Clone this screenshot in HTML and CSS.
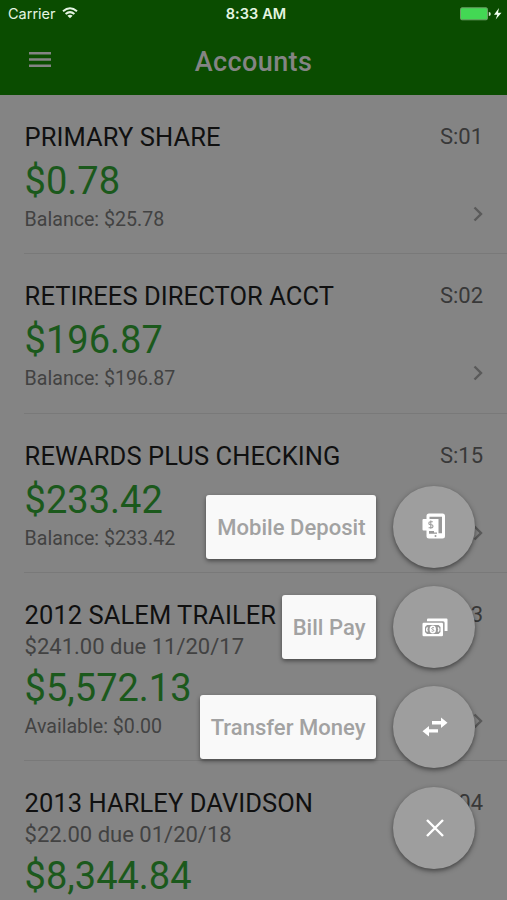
FILE: index.html
```html
<!DOCTYPE html>
<html lang="en">
<head>
<meta charset="utf-8">
<title>Accounts</title>
<link rel="stylesheet" href="styles.css">
</head>
<body>
<div class="screen">
  <header class="header">
    <div class="status">
      <div class="carrier"><span>Carrier</span>
        <svg width="16" height="12" viewBox="0 0 16 12" fill="none" stroke="#e4f5e2" stroke-width="2"><path d="M1 4.2Q8-1.8 15 4.2M3.6 7Q8 3.3 12.4 7"/><path d="M8 11.3L5.4 8.7Q8 6.7 10.6 8.7Z" fill="#e4f5e2" stroke="none"/></svg>
      </div>
      <div class="time">8:33 AM</div>
      <div class="power">
        <svg width="42" height="14" viewBox="0 0 42 14"><rect x=".5" y=".8" width="27" height="12" rx="1.5" fill="#43d854" stroke="#6c9d65"/><path d="M28.8 5a2 2 0 0 1 0 4z" fill="#d8ecd5"/><path d="M39 1L34 7.700H37.300L35.700 12.500L41.500 5.800H38Z" fill="#f2fff0"/></svg>
      </div>
    </div>
    <div class="nav">
      <svg class="menu" width="22" height="16" viewBox="0 0 22 16" fill="#848484"><path d="M0 0h22v2.4H0zM0 6.3h22v2.4H0zM0 12.6h22V15H0z"/></svg>
      <h1>Accounts</h1>
    </div>
  </header>
  <main class="list">
    <section class="row">
      <div class="info"><h2>PRIMARY SHARE</h2><div class="amount">$0.78</div><div class="note">Balance: $25.78</div></div>
      <div class="side"><span>S:01</span><svg class="chev" width="10" height="16" viewBox="0 0 10 16"><path d="M1.5 1.5L8 8L1.5 14.5"/></svg></div>
    </section>
    <section class="row">
      <div class="info"><h2>RETIREES DIRECTOR ACCT</h2><div class="amount">$196.87</div><div class="note">Balance: $196.87</div></div>
      <div class="side"><span>S:02</span><svg class="chev" width="10" height="16" viewBox="0 0 10 16"><path d="M1.5 1.5L8 8L1.5 14.5"/></svg></div>
    </section>
    <section class="row">
      <div class="info"><h2>REWARDS PLUS CHECKING</h2><div class="amount">$233.42</div><div class="note">Balance: $233.42</div></div>
      <div class="side"><span>S:15</span><svg class="chev" width="10" height="16" viewBox="0 0 10 16"><path d="M1.5 1.5L8 8L1.5 14.5"/></svg></div>
    </section>
    <section class="row loan">
      <div class="info"><h2>2012 SALEM TRAILER</h2><div class="due">$241.00 due 11/20/17</div><div class="amount">$5,572.13</div><div class="note">Available: $0.00</div></div>
      <div class="side"><span>L:03</span><svg class="chev" width="10" height="16" viewBox="0 0 10 16"><path d="M1.5 1.5L8 8L1.5 14.5"/></svg></div>
    </section>
    <section class="row loan">
      <div class="info"><h2>2013 HARLEY DAVIDSON</h2><div class="due">$22.00 due 01/20/18</div><div class="amount">$8,344.84</div></div>
      <div class="side"><span>L:04</span></div>
    </section>
  </main>
  <div class="actions">
    <div class="action"><span class="label">Mobile Deposit</span><span class="fab deposit">
      <svg width="24" height="26" viewBox="0 0 24 26"><path fill="#fff" d="M7 .5H20.500a2.500 2.500 0 0 1 2.500 2.500V23a2.500 2.500 0 0 1-2.500 2.500H7A2.500 2.500 0 0 1 4.500 23V17.500H1.500a1 1 0 0 1-1-1V7a1 1 0 0 1 1-1H4.500V3A2.500 2.500 0 0 1 7 .5z"/><path d="M7.500 3.700H20V20.300H16.500V6H7.500zM7 18h5v1.500h3v1.200H7z" fill="#999"/><path d="M10.800 8.700H8.300a1.400 1.400 0 0 0 0 3h1.200a1.400 1.400 0 0 1 0 3H6.600M8.800 7.500v8.300" fill="none" stroke="#9d9d9d" stroke-width="1.100"/><circle cx="13.500" cy="23" r="1" fill="#999"/></svg></span></div>
    <div class="action"><span class="label">Bill Pay</span><span class="fab">
      <svg width="26" height="19" viewBox="0 0 26 19"><path d="M6 .5H24.500a1 1 0 0 1 1 1V13H22.600V4.800a1.600 1.600 0 0 0-1.600-1.600H5V1.500a1 1 0 0 1 1-1z" fill="#fff"/><rect x=".5" y="4.700" width="20.500" height="13.500" rx="1.200" fill="#fff"/><path d="M5 7H16.500l2 2v5l-2 2H5l-2-2V9z" fill="#999"/><path d="M5.500 9.300q-1.800 2.200 0 4.400M16 9.300q1.800 2.200 0 4.400" fill="none" stroke="#fff" stroke-width="1.300"/><ellipse cx="10.800" cy="11.500" rx="3.200" ry="4" fill="#fff"/><path d="M12 9.800c-2.500-.8-3 1.300-1.200 1.700s1.200 2.300-1.200 1.600" fill="none" stroke="#999"/></svg></span></div>
    <div class="action"><span class="label">Transfer Money</span><span class="fab">
      <svg width="26" height="20" viewBox="0 0 26 20" fill="#fff"><path d="M10 4.100h9V.5l6.500 5.200-6.500 5.200V7.400h-9zM16 12.200H7V9L.5 14.200 7 19.400V15.600h9z"/></svg></span></div>
    <div class="action"><span class="fab">
      <svg width="18" height="18" viewBox="0 0 18 18"><path d="M1 1l16 16M17 1L1 17" stroke="#fff" stroke-width="2.400"/></svg></span></div>
  </div>
</div>
</body>
</html>
```
FILE: styles.css
```css
* { box-sizing: border-box; }
body { margin: 0; font-family: Roboto, sans-serif; }
h1, h2 { margin: 0; font-weight: 400; }
svg { display: block; flex: none; }
.screen { position: relative; width: 507px; height: 900px; overflow: hidden; background: #848484; }
.header { height: 95px; background: #0a4c00; }
.status { display: grid; grid-template-columns: 1fr auto 1fr; align-items: center; height: 28px; padding: 0 5px 0 8px; color: #e4f5e2; font: 14.500px/28px Inter, sans-serif; }
.carrier { display: flex; align-items: center; gap: 6px; }
.carrier svg { margin-top: -3px; }
.time { padding-left: 2px; font-weight: 600; font-size: 14.500px; letter-spacing: .1px; }
.power { display: flex; justify-content: flex-end; }
.nav { display: grid; grid-template-columns: 1fr auto 1fr; align-items: center; height: 67px; padding: 0 29px; }
.menu { margin-top: -5px; }
h1 { color: #848484; font-size: 27px; font-weight: 500; line-height: 69px; letter-spacing: .4px; }
.row { display: flex; justify-content: space-between; height: 159.300px; margin-left: 24px; padding: 26px 24px 0 0; border-bottom: 1px solid #797979; }
.loan { height: 188.300px; }
.info { padding-left: .6px; white-space: nowrap; }
h2 { color: #101010; font-size: 25.500px; line-height: 32px; letter-spacing: .07px; }
.amount { color: #1b591c; font-size: 38px; line-height: 56px; }
.note { color: #424242; font-size: 19.600px; line-height: 22px; }
.due { color: #424242; font-size: 22px; line-height: 29px; }
.loan .due { padding-top: 1px; margin-bottom: -1px; }
.side { display: flex; flex-direction: column; align-items: flex-end; color: #383838; font-size: 22px; line-height: 32px; }
.chev { margin-top: 53px; fill: none; stroke: #5a5a5a; stroke-width: 2.400; }
.loan .chev { margin-top: 82px; }
.actions { position: absolute; top: 486px; right: 32px; display: flex; flex-direction: column; align-items: flex-end; gap: 18.200px; }
.action { display: flex; align-items: center; gap: 17px; height: 82px; }
.label { height: 64px; padding: 0 10.500px 0 11px; border-radius: 3px; background: #f9f9f9; color: #a2a2a2; font-size: 22px; font-weight: 500; line-height: 65px; box-shadow: 0 2px 4px rgba(0, 0, 0, .45); white-space: nowrap; letter-spacing: .03px; }
.fab { display: flex; align-items: center; justify-content: center; width: 82px; height: 82px; padding-left: 1px; border-radius: 50%; background: #9e9e9e; box-shadow: 0 2px 5px rgba(0, 0, 0, .5); }
.deposit { padding: 0 1px 2px 0; }
```
